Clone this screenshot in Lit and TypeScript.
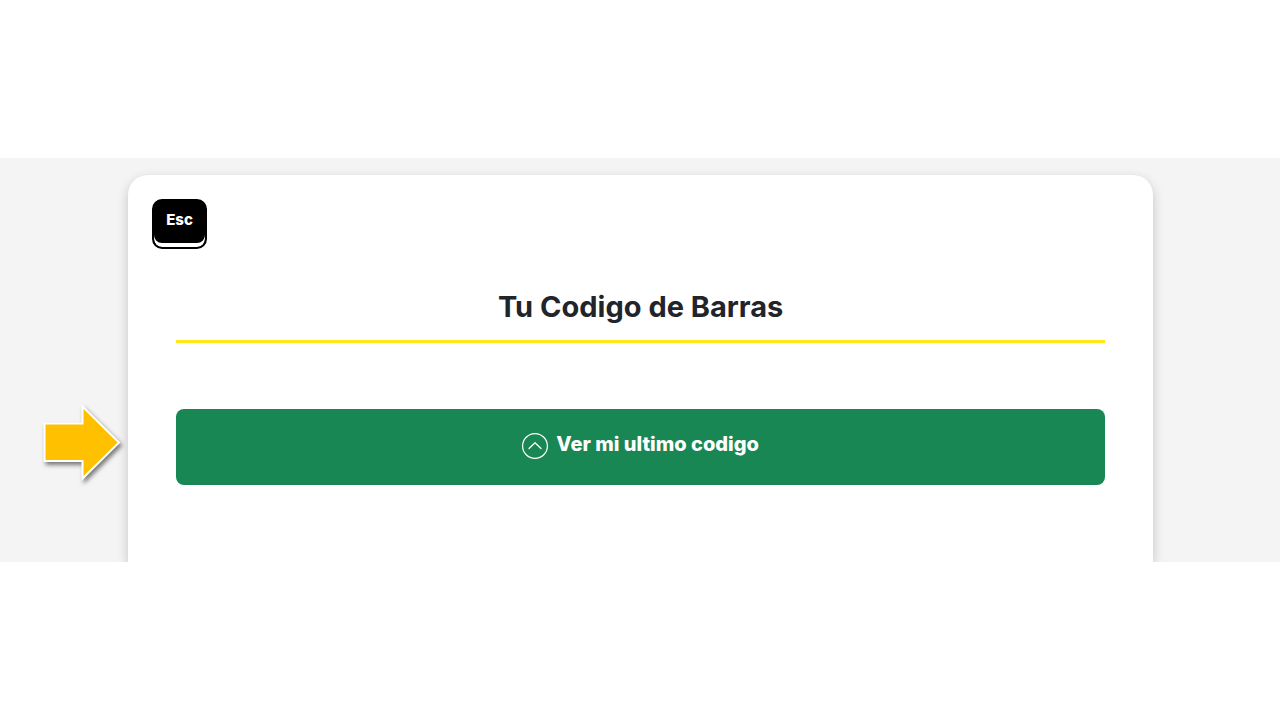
import { LitElement, html, css } from "lit";
import { customElement } from "lit/decorators.js";

@customElement("app-root")
export class AppRoot extends LitElement {
  static styles = css`
    :host {
      display: flex;
      flex-direction: column;
      justify-content: center;
      min-height: 100vh;
      background: #fff;
      font-family: Inter, "Open Sans", sans-serif;
      color: #212529;
    }
    * {
      box-sizing: border-box;
    }
    .band {
      position: relative;
      padding-top: 17px;
      background: #f4f4f4;
      overflow: hidden;
    }
    .card {
      width: 80.1%;
      margin: 0 0 0 10%;
      padding: 24px 24px 77px;
      background: #fff;
      border-radius: 20px 20px 0 0;
      box-shadow: 0 4px 12px rgba(0, 0, 0, 0.2);
    }
    .key {
      display: block;
      width: 55px;
      height: 50px;
      padding: 0 0 8px;
      border: 2px solid #000;
      border-radius: 10px;
      background: #000;
      box-shadow: inset 0 -4px 0 #fff;
      color: #fff;
      font: inherit;
      font-size: 15px;
      font-weight: 800;
      line-height: 20px;
      cursor: pointer;
    }
    .content {
      padding: 0 24px;
    }
    .title {
      margin: 38px 0 0;
      padding-bottom: 13px;
      border-bottom: 3px solid #ffe81a;
      font-size: 29px;
      font-weight: 700;
      line-height: 40px;
      text-align: center;
    }
    .last {
      display: flex;
      align-items: center;
      justify-content: center;
      gap: 8px;
      width: 100%;
      margin-top: 66px;
      padding: 21px 16px 23px;
      border: 0;
      border-radius: 8px;
      background: #198754;
      color: #fff;
      font: inherit;
      font-size: 20px;
      font-weight: 800;
      line-height: 32px;
      cursor: pointer;
    }
    .label {
      padding-bottom: 3px;
      line-height: 29px;
    }
    .chevron {
      width: 26px;
      height: 26px;
    }
    .pointer {
      position: absolute;
      left: 40px;
      top: 244px;
      width: 88px;
      height: 84px;
      filter: drop-shadow(2px 3px 2px rgba(0, 0, 0, 0.5));
    }
  `;

  render() {
    return html`
      <main class="band">
        <section class="card">
          <button class="key" type="button">Esc</button>
          <div class="content">
            <h1 class="title">Tu Codigo de Barras</h1>
            <button class="last" type="button">
              <svg class="chevron" viewBox="0 0 26 26" fill="none" stroke="#fff" aria-hidden="true">
                <circle cx="13" cy="13" r="12.4" stroke-width="1.2" />
                <path d="M7 15.5 13 9.7 19 15.5" stroke-width="1.2" stroke-linecap="round" stroke-linejoin="round" />
              </svg>
              <span class="label">Ver mi ultimo codigo</span>
            </button>
          </div>
        </section>
        <svg class="pointer" viewBox="0 0 88 84" aria-hidden="true">
          <path d="M4.5 21.5H42.5V4.5L79 40.5 42.5 76.5V59H4.5Z" fill="#ffc000" stroke="#fff" stroke-width="2" />
        </svg>
      </main>
    `;
  }
}
